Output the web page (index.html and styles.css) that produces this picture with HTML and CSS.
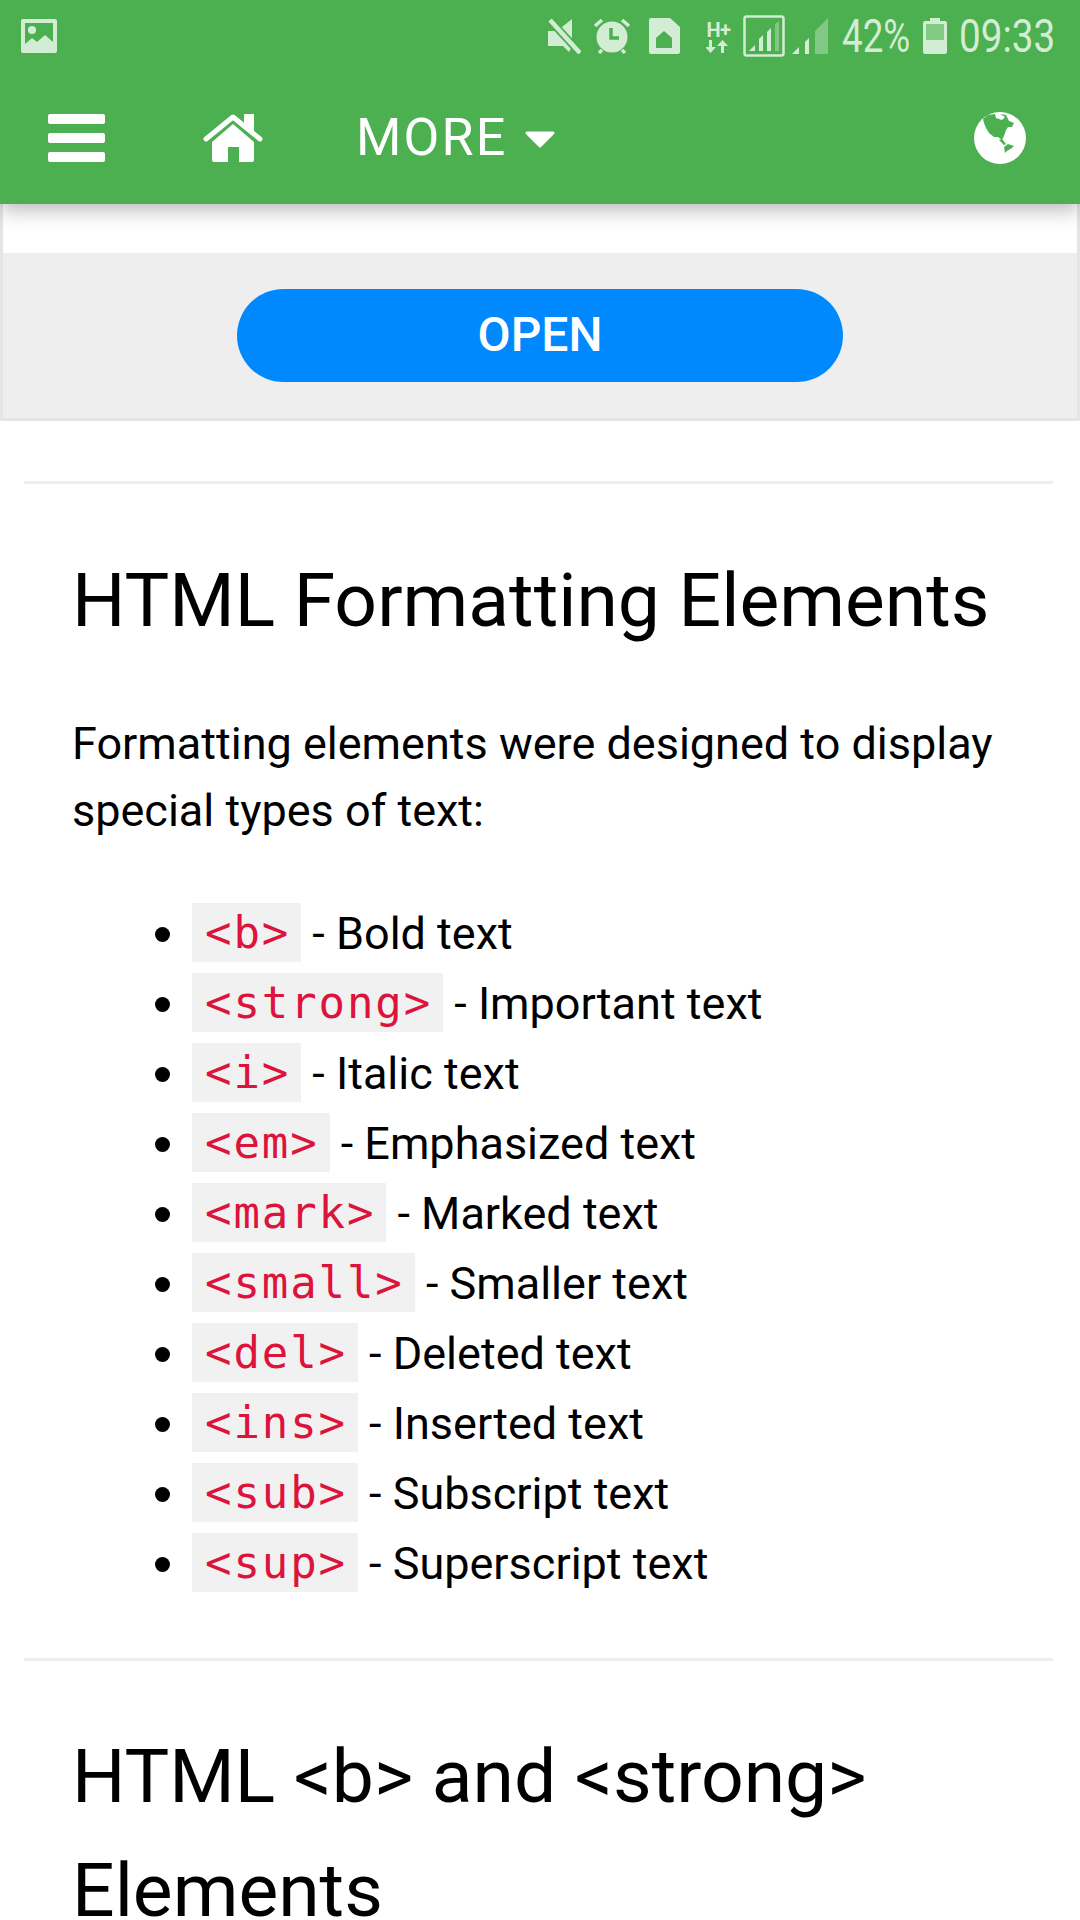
FILE: index.html
```html
<!DOCTYPE html>
<html lang="en">
<head>
    <meta charset="UTF-8">
    <title>HTML Formatting Elements</title>
    <link rel="stylesheet" href="styles.css">
</head>
<body>
    <div class="top-green">
        <div class="status-bar">
            <svg class="st-pic" width="36" height="34" viewBox="0 0 36 34">
                <path fill="#d3edd4" fill-rule="evenodd" d="M2 0h32a2 2 0 0 1 2 2v30a2 2 0 0 1-2 2H2a2 2 0 0 1-2-2V2a2 2 0 0 1 2-2zM4 4v21l7-6 5 4 8-7 8 7V4z"/>
                <circle cx="11" cy="11" r="4" fill="#d3edd4"/>
            </svg>
            <div class="st-right">
                <svg class="st-mute" width="33" height="36" viewBox="0 0 33 36">
                    <path fill="#d3edd4" d="M0 13h9L24 1v27l-3 6-6-6H0z"/>
                    <path stroke="#4caf50" stroke-width="8" d="M0 0l33 36"/>
                    <path stroke="#d3edd4" stroke-width="4.500" d="M2 2l30 33"/>
                </svg>
                <svg class="st-alarm" width="36" height="36" viewBox="0 0 36 36">
                    <circle cx="18" cy="19" r="15.500" fill="#d3edd4"/>
                    <path fill="none" stroke="#4caf50" stroke-width="3.500" d="M17 10v10h8"/>
                    <path stroke="#d3edd4" stroke-width="3.500" d="M1 8l7-6M35 8l-7-6M5 35l3-3M31 35l-3-3"/>
                </svg>
                <svg class="st-sim" width="31" height="36" viewBox="0 0 31 36">
                    <path fill="#d3edd4" fill-rule="evenodd" d="M2 0h19l10 9v25a2 2 0 0 1-2 2H2a2 2 0 0 1-2-2V2a2 2 0 0 1 2-2zM15 13L7 20v10h16V20z"/>
                </svg>
                <div class="st-net"><span>H+</span><svg width="25" height="13" viewBox="0 0 25 13"><path fill="#d3edd4" d="M3 0h3v7h4l-5.500 6L-1 7h4zM18 13h-3V6h-4l5.500-6L22 6h-4z"/></svg></div>
                <svg class="st-box" width="42" height="42" viewBox="0 0 42 42">
                    <rect x="1.500" y="1.500" width="39" height="39" rx="2" fill="none" stroke="#d3edd4" stroke-width="2.500"/>
                    <path fill="#d3edd4" d="M6 36l6-6v6zM16 36V24l4-4v16zM24 36V17l4-4v23z"/>
                    <path fill="#d3edd4" d="M32 36V9l4-3v30z" opacity=".4"/>
                </svg>
                <svg class="st-sig" width="36" height="36" viewBox="0 0 36 36">
                    <path fill="#d3edd4" d="M0 36l7-7v7zM13 36V24l4-4v16z"/>
                    <path fill="#d3edd4" d="M23 36V13L36 0v36z" opacity=".4"/>
                </svg>
                <span class="st-text st-batt-num">42%</span>
                <svg class="st-batt" width="24" height="36" viewBox="0 0 24 36">
                    <path fill="#d3edd4" d="M7 0h10v3h5a2 2 0 0 1 2 2v29a2 2 0 0 1-2 2H2a2 2 0 0 1-2-2V5a2 2 0 0 1 2-2h5z"/>
                    <rect x="3" y="6" width="18" height="16" fill="#82cb85"/>
                </svg>
                <span class="st-text st-time">09:33</span>
            </div>
        </div>
        <div class="nav-bar">
            <div class="nav-burger"><span></span><span></span><span></span></div>
            <svg class="nav-home" width="60" height="48" viewBox="0 0 60 48">
                <path fill="#fff" d="M9 28L30 10l21 18v18a2 2 0 0 1-2 2H36V33H25v15H11a2 2 0 0 1-2-2z"/>
                <path fill="none" stroke="#fff" stroke-width="5" stroke-linecap="round" stroke-linejoin="round" d="M3 25L30 3l27 22"/>
                <path fill="#fff" d="M41 0h10v19l-10-9z"/>
            </svg>
            <div class="nav-more">MORE</div>
            <svg class="caret" width="30" height="17" viewBox="0 0 30 17">
                <path fill="#fff" stroke="#fff" stroke-width="3" stroke-linejoin="round" d="M2 2h26L15 15z"/>
            </svg>
            <svg class="nav-globe" width="52" height="52" viewBox="0 0 52 52">
                <circle cx="26" cy="26" r="26" fill="#fff"/>
                <path fill="#4caf50" d="M9 7l5-4 7-1 1 4 6 2 3-3-5-3 6 1 3 6 5 2-2 4h-4l-2 3-2 6-2 4-4-3h-4l-5-4-3-5-2-5zM25 28l3-1 4 5-2 1zM30 35l4-3 6 2-2 2-5 3-2 2z"/>
            </svg>
        </div>
    </div>

    <div class="ad-wrap">
        <div class="ad-gap"></div>
        <div class="ad-box"><button class="open-btn">OPEN</button></div>
    </div>

    <div class="content">
        <hr>
        <h2>HTML Formatting Elements</h2>
        <p>Formatting elements were designed to display special types of text:</p>
        <ul>
            <li><code>&lt;b&gt;</code> - Bold text</li>
            <li><code>&lt;strong&gt;</code> - Important text</li>
            <li><code>&lt;i&gt;</code> - Italic text</li>
            <li><code>&lt;em&gt;</code> - Emphasized text</li>
            <li><code>&lt;mark&gt;</code> - Marked text</li>
            <li><code>&lt;small&gt;</code> - Smaller text</li>
            <li><code>&lt;del&gt;</code> - Deleted text</li>
            <li><code>&lt;ins&gt;</code> - Inserted text</li>
            <li><code>&lt;sub&gt;</code> - Subscript text</li>
            <li><code>&lt;sup&gt;</code> - Superscript text</li>
        </ul>
        <hr>
        <h2 class="second">HTML &lt;b&gt; and &lt;strong&gt; Elements</h2>
    </div>
</body>
</html>
```

FILE: styles.css
```css
html, body {
    margin: 0;
    padding: 0;
    height: 1920px;
    overflow: hidden;
    background-color: #fff;
}
body {
    font-family: Roboto, sans-serif;
    color: #000;
}
.top-green {
    position: relative;
    z-index: 2;
    height: 204px;
    background-color: #4caf50;
    box-shadow: 0 5px 20px rgba(0, 0, 0, 0.3);
}
.status-bar {
    display: flex;
    justify-content: space-between;
    align-items: center;
    height: 72px;
    padding: 0 26px 0 21px;
}
.status-bar svg {
    display: block;
}
.st-right {
    display: flex;
    align-items: center;
}
.st-alarm {
    margin-left: 13px;
}
.st-sim {
    margin-left: 19px;
}
.st-net {
    display: flex;
    flex-direction: column;
    align-items: center;
    width: 25px;
    margin-left: 26px;
    color: #d3edd4;
    font-size: 20px;
    font-weight: 700;
    line-height: 20px;
    letter-spacing: -0.500px;
}
.st-box {
    margin-left: 12px;
}
.st-sig {
    margin-left: 7px;
}
.st-text {
    font-size: 46px;
    font-weight: 400;
    color: #d3edd4;
    white-space: nowrap;
    transform: scaleX(0.8);
    transform-origin: left center;
}
.st-batt-num {
    width: 70px;
    margin-left: 14px;
}
.st-batt {
    margin-left: 11px;
}
.st-time {
    width: 95px;
    margin-left: 12px;
    transform: scaleX(0.84);
}
.nav-bar {
    display: flex;
    align-items: center;
    height: 132px;
    padding: 0 54px 0 48px;
}
.nav-burger {
    display: flex;
    flex-direction: column;
    gap: 9px;
    width: 57px;
}
.nav-burger span {
    display: block;
    height: 10px;
    border-radius: 2px;
    background-color: #fff;
}
.nav-home {
    margin-left: 98px;
}
.nav-more {
    margin-left: 93px;
    color: #fff;
    font-size: 52px;
    line-height: 60px;
    letter-spacing: 2.200px;
}
.caret {
    margin: 2px 0 0 17px;
}
.nav-globe {
    margin-left: auto;
}
.ad-wrap {
    border-left: 3px solid #e4e5e7;
    border-right: 3px solid #e4e5e7;
    border-bottom: 3px solid #e4e5e7;
}
.ad-gap {
    height: 49px;
}
.ad-box {
    display: flex;
    justify-content: center;
    align-items: center;
    height: 165px;
    background-color: #eee;
}
.open-btn {
    width: 606px;
    height: 93px;
    padding: 0 0 2px;
    border: none;
    border-radius: 47px;
    background-color: #0088ff;
    color: #fff;
    font-family: Roboto, sans-serif;
    font-size: 48px;
    font-weight: 500;
}
.content {
    padding: 60px 27px 0 24px;
}
hr {
    height: 3px;
    margin: 0;
    border: none;
    background-color: #eee;
}
h2 {
    margin: 66px 0 0 48px;
    font-size: 75px;
    font-weight: 400;
    line-height: 100px;
}
p {
    margin: 60px 0 0 48px;
    font-size: 45px;
    line-height: 67px;
}
ul {
    margin: 53px 0 0 48px;
    padding: 0 0 0 120px;
}
li {
    height: 70px;
    font-size: 45px;
    line-height: 70px;
}
li::marker {
    font-size: 50px;
}
code {
    display: inline-block;
    height: 59px;
    padding: 0 11px 0 13px;
    background-color: #f1f1f1;
    color: crimson;
    font-family: "DejaVu Sans Mono", monospace;
    font-size: 44px;
    line-height: 59px;
    letter-spacing: 1.900px;
    vertical-align: 1px;
}
ul + hr {
    margin-top: 61px;
}
h2.second {
    margin-top: 58px;
    line-height: 114px;
}
```
